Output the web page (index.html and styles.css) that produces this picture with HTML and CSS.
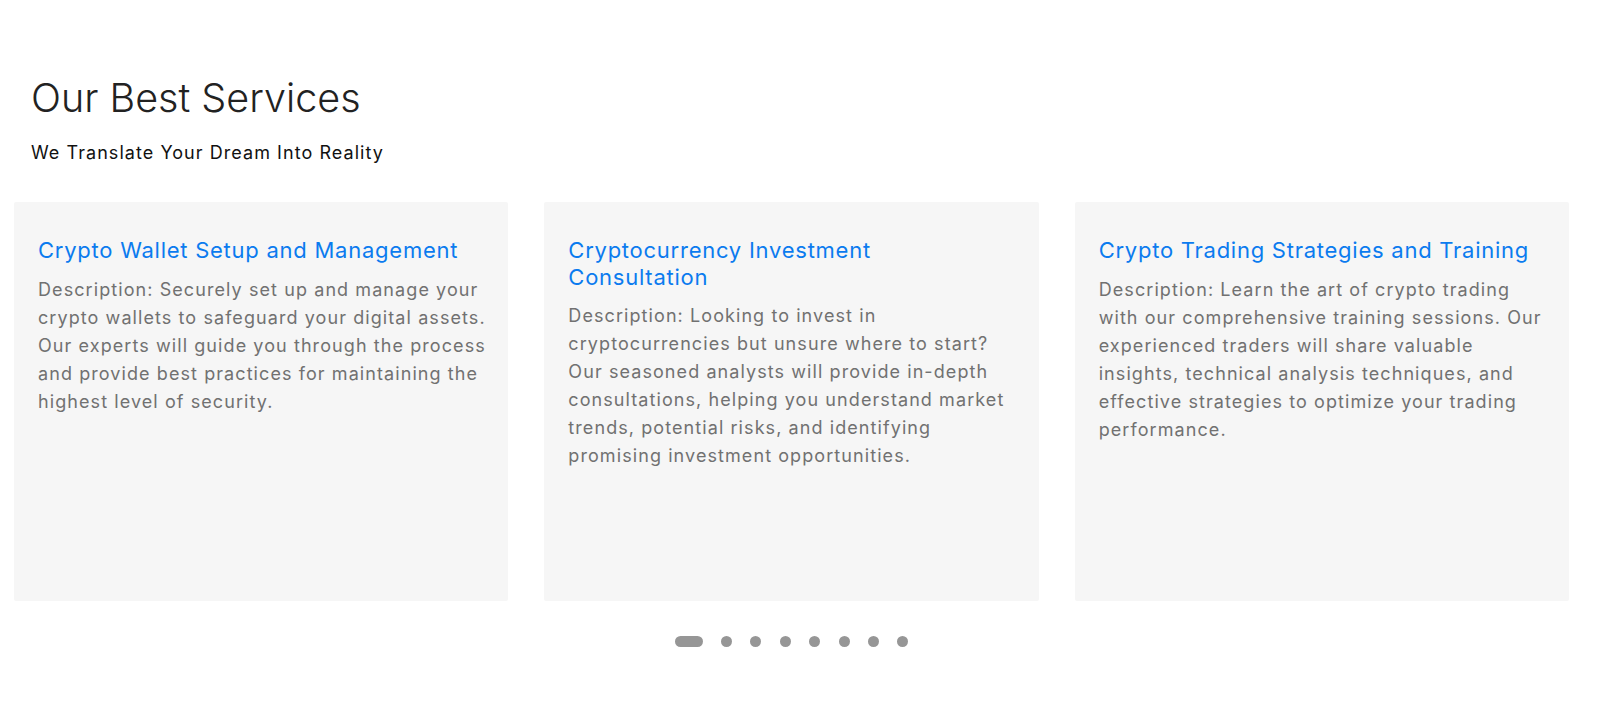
FILE: index.html
```html
<!DOCTYPE html>
<html lang="en">

<head>
    <meta charset="UTF-8">
    <meta name="viewport" content="width=device-width, initial-scale=1.0">
    <title>Our Best Services</title>
    <link rel="stylesheet" href="styles.css">
</head>

<body>
    <section class="services">
        <div class="services-head">
            <h2>Our Best Services</h2>
            <p>We Translate Your Dream Into Reality</p>
        </div>
        <ul class="service-list">
            <li class="service-card">
                <h3>Crypto Wallet Setup and Management</h3>
                <p>Description: Securely set up and manage your crypto wallets to safeguard your digital assets. Our experts will guide you through the process and provide best practices for maintaining the highest level of security.</p>
            </li>
            <li class="service-card">
                <h3>Cryptocurrency Investment Consultation</h3>
                <p>Description: Looking to invest in cryptocurrencies but unsure where to start? Our seasoned analysts will provide in-depth consultations, helping you understand market trends, potential risks, and identifying promising investment opportunities.</p>
            </li>
            <li class="service-card">
                <h3>Crypto Trading Strategies and Training</h3>
                <p>Description: Learn the art of crypto trading with our comprehensive training sessions. Our experienced traders will share valuable insights, technical analysis techniques, and effective strategies to optimize your trading performance.</p>
            </li>
        </ul>
        <div class="pagination">
            <span class="dot active"></span>
            <span class="dot"></span>
            <span class="dot"></span>
            <span class="dot"></span>
            <span class="dot"></span>
            <span class="dot"></span>
            <span class="dot"></span>
            <span class="dot"></span>
        </div>
    </section>
</body>

</html>
```

FILE: styles.css
```css
body {
    margin: 0;
    padding: 0;
    box-sizing: border-box;
    font-family: Inter, 'Noto Sans', sans-serif;
    background-color: #fff;
}

.services {
    width: 1555px;
    padding: 74px 0 0 14px;
}

.services-head {
    padding-left: 17px;
}

.services-head h2 {
    font-size: 39.5px;
    line-height: 48px;
    font-weight: 300;
    color: #222;
    margin: 0;
}

.services-head p {
    font-size: 18px;
    line-height: 24px;
    font-weight: 400;
    letter-spacing: 1.05px;
    color: #111;
    margin: 19px 0 0;
}

.service-list {
    list-style: none;
    margin: 37px 0 0;
    padding: 0;
    display: flex;
    gap: 36px;
}

.service-card {
    flex: 1;
    height: 399px;
    box-sizing: border-box;
    padding: 35px 20px 0 24px;
    background-color: #f6f6f6;
    border-radius: 2px;
}

.service-card h3 {
    font-size: 22px;
    line-height: 26.5px;
    font-weight: 400;
    letter-spacing: 0.75px;
    color: #0b7bef;
    margin: 0 0 12px;
    padding-right: 6px;
}

.service-card p {
    font-size: 18px;
    line-height: 28px;
    letter-spacing: 1.08px;
    color: #717171;
    margin: 0;
}

.pagination {
    display: flex;
    justify-content: center;
    align-items: center;
    gap: 18.4px;
    margin-top: 35px;
}

.dot {
    width: 11px;
    height: 11px;
    border-radius: 6px;
    background-color: #969696;
}

.dot.active {
    width: 28px;
}
```
